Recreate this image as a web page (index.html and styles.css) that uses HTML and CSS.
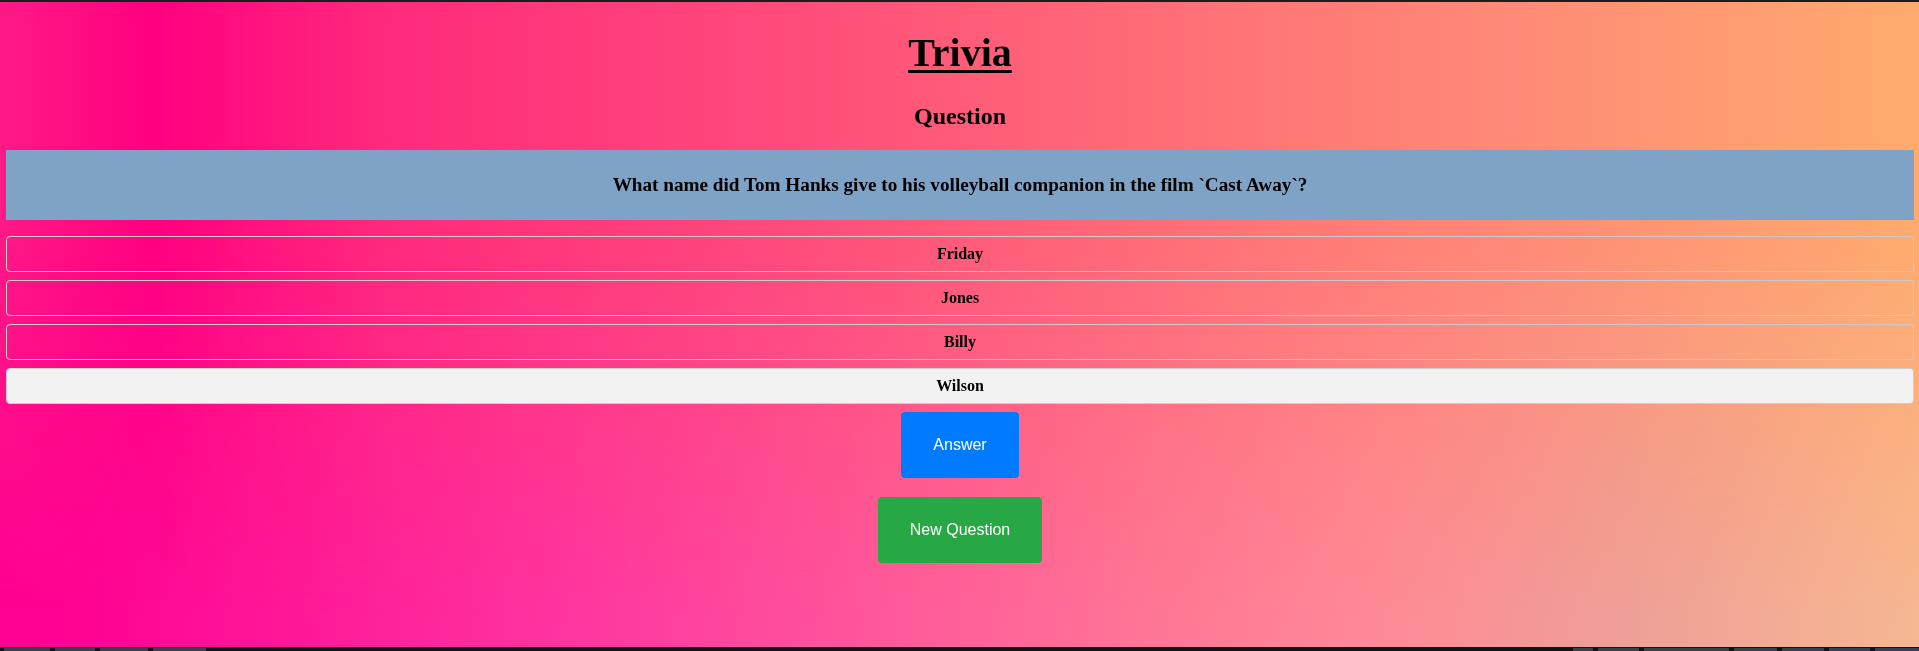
FILE: index.html
```html
<!DOCTYPE html>
<html lang="en">
<head>
<meta charset="utf-8">
<title>Trivia</title>
<link rel="stylesheet" href="styles.css">
</head>
<body>
  <main class="app">
    <h1 class="title">Trivia</h1>
    <h2 class="subtitle">Question</h2>
    <div class="question">What name did Tom Hanks give to his volleyball companion in the film `Cast Away`?</div>
    <div class="options">
      <button class="option">Friday</button>
      <button class="option">Jones</button>
      <button class="option">Billy</button>
      <button class="option option-selected">Wilson</button>
    </div>
    <div class="actions">
      <button class="btn btn-answer">Answer</button>
      <button class="btn btn-new">New Question</button>
    </div>
  </main>
  <div class="taskbar">
    <span class="tb-item tb-a"></span>
    <span class="tb-item tb-b"></span>
    <span class="tb-item tb-c"></span>
    <span class="tb-item tb-d"></span>
    <span class="tb-spacer"></span>
    <span class="tb-item tb-e"></span>
    <span class="tb-item tb-f"></span>
    <span class="tb-item tb-g"></span>
    <span class="tb-item tb-h"></span>
    <span class="tb-item tb-i"></span>
    <span class="tb-item tb-j"></span>
    <span class="tb-item tb-k"></span>
  </div>
</body>
</html>
```

FILE: styles.css
```css
html {
  margin: 0;
  min-height: 100%;
  background: linear-gradient(to right,
    #ff1a86 0%, #ff0080 8%, #ff2a7c 20%, #ff4a7b 40%,
    #ff5f78 52%, #ff7a76 68%, #ff8c76 80%, #ffab6e 100%);
}

body {
  margin: 0;
  min-height: 100vh;
  box-sizing: border-box;
  border-top: 2px solid #1c1c1c;
  display: flex;
  flex-direction: column;
  font-family: "Liberation Serif", "Times New Roman", serif;
  color: #000;
}

body::before {
  content: "";
  position: fixed;
  inset: 0;
  z-index: -1;
  background: linear-gradient(to right,
    #ff0092 0%, #ff0494 5%, #ff1898 15%, #ff36a0 30%,
    #ff569c 45%, #ff7696 60%, #ff8a96 72%, #eea098 85%, #f7b792 100%);
  -webkit-mask-image: linear-gradient(to bottom, transparent 35%, #000 95%);
  mask-image: linear-gradient(to bottom, transparent 35%, #000 95%);
}

.app {
  flex: 1;
  margin: 0 5px 0 6px;
  display: flex;
  flex-direction: column;
}

.title {
  margin: 28px 0 0;
  font-size: 40px;
  line-height: 46px;
  font-weight: bold;
  text-align: center;
  text-decoration: underline;
  text-decoration-thickness: 3px;
  text-underline-offset: 4px;
}

.subtitle {
  margin: 26px 0 0;
  font-size: 24px;
  line-height: 28px;
  font-weight: bold;
  text-align: center;
}

.question {
  margin-top: 20px;
  padding: 25px 10px;
  background: #7fa3c7;
  font-size: 19.2px;
  line-height: 20px;
  font-weight: bold;
  text-align: center;
}

.options {
  margin-top: 16px;
  display: flex;
  flex-direction: column;
  gap: 8px;
}

.option {
  display: block;
  width: 100%;
  margin: 0;
  padding: 8px 10px;
  border: 1px solid #cfc8ca;
  border-radius: 4px;
  background: transparent;
  font-family: "Liberation Serif", "Times New Roman", serif;
  font-size: 16px;
  line-height: 18px;
  font-weight: bold;
  color: #000;
  text-align: center;
}

.option-selected {
  background: #f2f2f2;
  border-color: #cccccc;
}

.actions {
  margin-top: 8px;
  display: flex;
  flex-direction: column;
  align-items: center;
  gap: 19px;
}

.btn {
  margin: 0;
  padding: 24px 32px;
  border: none;
  border-radius: 4px;
  font-family: "Liberation Sans", Arial, sans-serif;
  font-size: 16px;
  line-height: 18px;
  color: #fff;
}

.btn-answer { background: #007bff; }
.btn-new { background: #28a745; }

.taskbar {
  height: 4px;
  box-sizing: border-box;
  padding-top: 1px;
  background: #111318;
  display: flex;
  gap: 5px;
  padding-left: 4px;
}

.tb-item {
  height: 3px;
  background: #3b404c;
  border-radius: 1px 1px 0 0;
}
.tb-spacer { flex: 1; }
.tb-a { width: 46px; }
.tb-b { width: 40px; }
.tb-c { width: 48px; }
.tb-d { width: 53px; }
.tb-e { width: 20px; }
.tb-f { width: 41px; }
.tb-g { width: 85px; }
.tb-h { width: 43px; }
.tb-i { width: 42px; }
.tb-j { width: 41px; }
.tb-k { width: 44px; }
```
